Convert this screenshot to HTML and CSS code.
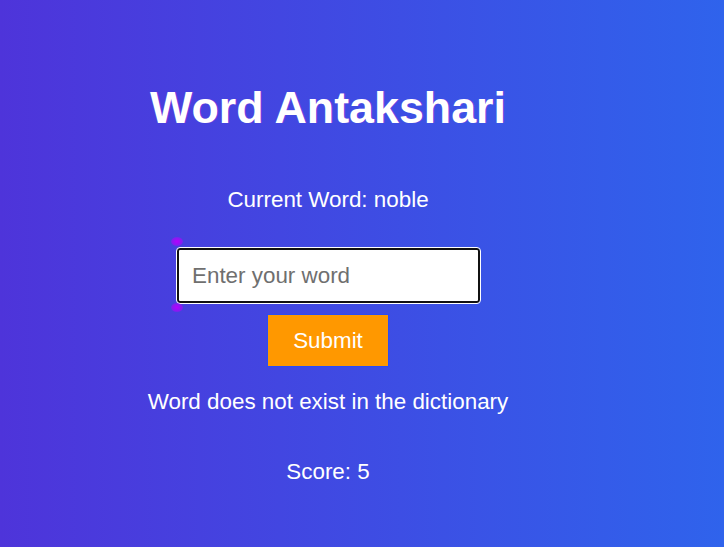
FILE: index.html
```html
<!DOCTYPE html>
<html lang="en">
<head>
<meta charset="utf-8">
<title>Word Antakshari</title>
<link rel="stylesheet" href="styles.css">
</head>
<body>
<main class="game">
  <h1 class="title">Word Antakshari</h1>
  <p class="current">Current Word: noble</p>
  <div class="field">
    <input class="word-input" type="text" placeholder="Enter your word">
  </div>
  <button class="submit" type="button">Submit</button>
  <p class="message">Word does not exist in the dictionary</p>
  <p class="score">Score: 5</p>
</main>
</body>
</html>
```
FILE: styles.css
```css
html, body {
  margin: 0;
  padding: 0;
  height: 100%;
}
body {
  background: linear-gradient(to right, #4e34da, #2f63ec);
  font-family: "Liberation Sans", Arial, sans-serif;
  color: #ffffff;
  overflow: hidden;
}
.game {
  width: 656px;
  display: flex;
  flex-direction: column;
  align-items: center;
  padding-top: 81px;
}
.title {
  margin: 0;
  font-size: 44.8px;
  line-height: 52px;
  font-weight: bold;
  text-shadow: 1px 0 0 rgba(255, 0, 200, 0.25);
}
.current {
  margin: 54px 0 0;
  font-size: 22.4px;
  line-height: 26px;
}
.field {
  position: relative;
  margin-top: 35px;
  margin-left: 1px;
}
.field::before,
.field::after {
  content: "";
  position: absolute;
  left: -6px;
  width: 12px;
  height: 9px;
  border-radius: 50%;
  background: radial-gradient(ellipse at center, #b400ff 0%, rgba(180, 0, 255, 0.6) 55%, rgba(180, 0, 255, 0) 100%);
}
.field::before {
  top: -11px;
}
.field::after {
  bottom: -9px;
}
.word-input {
  display: block;
  box-sizing: border-box;
  width: 303px;
  height: 55px;
  margin: 0;
  padding: 0 13px;
  border: 2px solid #111111;
  border-radius: 3px;
  outline: 1px solid #ffffff;
  background: #ffffff;
  font-family: "Liberation Sans", Arial, sans-serif;
  font-size: 22.4px;
  color: #222222;
}
.word-input::placeholder {
  color: #6f6f6f;
}
.submit {
  box-sizing: border-box;
  width: 122px;
  height: 53px;
  margin-top: 11px;
  padding: 0;
  border: 1px solid #2a4cf5;
  background: #ff9800;
  color: #ffffff;
  font-family: "Liberation Sans", Arial, sans-serif;
  font-size: 22.4px;
  line-height: 26px;
  cursor: pointer;
}
.message {
  margin: 22px 0 0;
  font-size: 22.4px;
  line-height: 26px;
}
.score {
  margin: 44px 0 0;
  font-size: 22.4px;
  line-height: 26px;
}
```
